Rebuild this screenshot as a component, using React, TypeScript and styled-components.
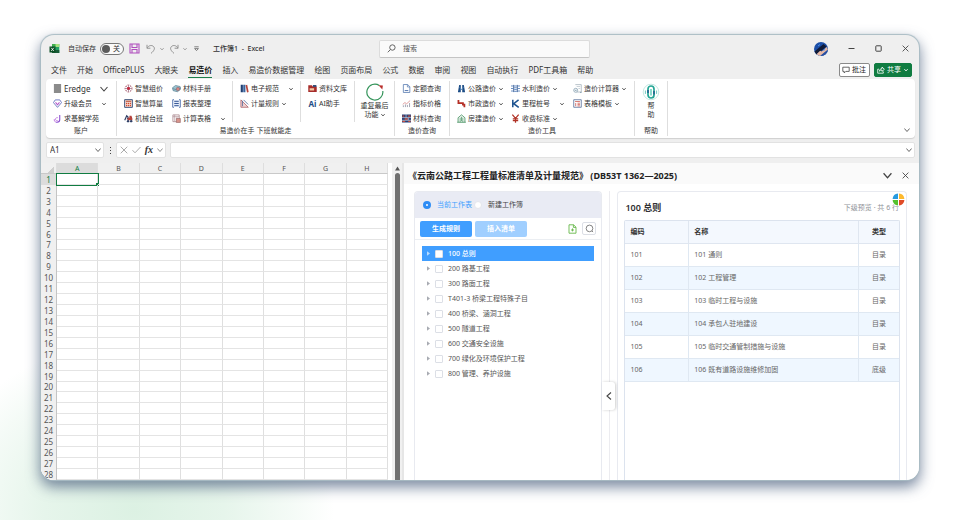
import React, { useState } from "react";
import styled, { createGlobalStyle, css } from "styled-components";

const Global = createGlobalStyle`
  *, *::before, *::after { box-sizing: border-box; }
  body {
    margin: 0;
    background: #fff;
    color: #333;
    font: 7px/10px "Noto Sans", "Noto Sans CJK SC", sans-serif;
  }
  button, input { font: inherit; color: inherit; margin: 0; padding: 0; border: 0; background: none; }
  ul { list-style: none; margin: 0; padding: 0; }
  h1, h2 { margin: 0; }
  svg { display: block; flex: none; }
`;

/* ---------- page and window ---------- */

const Page = styled.main`
  display: flex;
  height: 100vh;
  padding: 35px 41px 40px;
  background: radial-gradient(ellipse 200px 170px at 14% 98%, #dcf1e3 0%, #e6f5eb 45%, #f5fbf7 80%, rgba(255, 255, 255, 0) 100%), #fff;
`;

const AppWindow = styled.div`
  flex: 1;
  min-width: 0;
  display: flex;
  flex-direction: column;
  overflow: hidden;
  border-radius: 13px;
  background: #efefef;
  box-shadow: 0 0 1px 1px #a9bcc4, 0 6px 14px 1px rgba(78, 98, 128, 0.75);
`;

/* ---------- title bar ---------- */

const TitleBar = styled.header`
  flex: none;
  display: grid;
  grid-template-columns: 338px minmax(80px, 211px) 1fr;
  align-items: center;
  height: 27px;
`;

const QuickAccess = styled.div`
  display: flex;
  align-items: center;
  padding-left: 8px;
`;

const QuickButton = styled.button<{ $gap?: number }>`
  display: flex;
  align-items: center;
  gap: 4px;
  margin-left: ${(p) => p.$gap ?? 5}px;
`;

const AutoSave = styled.label`
  display: flex;
  align-items: center;
  gap: 4px;
  margin-left: 8px;
`;

const Switch = styled.span`
  display: flex;
  align-items: center;
  width: 24px;
  height: 12px;
  padding: 0 3px 0 1px;
  border: 1px solid #777;
  border-radius: 6px;
  background: #fafafa;
  justify-content: space-between;
`;

const SwitchInput = styled.input`
  appearance: none;
  width: 8px;
  height: 8px;
  border-radius: 50%;
  background: #5c5c5c;
`;

const DocTitle = styled.h1`
  margin-left: 14px;
  font-size: 7px;
  font-weight: 500;
  white-space: pre;
`;

const SearchBox = styled.label`
  display: flex;
  align-items: center;
  gap: 7px;
  height: 18px;
  padding-left: 7px;
  border: 1px solid #dcdcdc;
  border-bottom-color: #c4c4c4;
  border-radius: 2px;
  background: #fafafa;
`;

const SearchInput = styled.input`
  flex: 1;
  min-width: 0;
  outline: 0;
  &::placeholder { color: #555; opacity: 1; }
`;

const WindowButtons = styled.div`
  display: flex;
  align-items: center;
  justify-content: flex-end;
  gap: 20px;
  padding-right: 10px;
`;

const PlainButton = styled.button`
  display: grid;
  place-items: center;
`;

/* ---------- tabs ---------- */

const TabRow = styled.div`
  flex: none;
  display: flex;
  justify-content: space-between;
  height: 17px;
  padding: 0 7px 0 10px;
`;

const Tabs = styled.nav`
  display: flex;
  gap: 10px;
`;

const Tab = styled.a<{ $active?: boolean }>`
  height: 16px;
  padding-top: 3px;
  color: #333;
  font-size: 8px;
  line-height: 10px;
  text-decoration: none;
  white-space: nowrap;
  ${(p) => p.$active && css`
    color: #111;
    font-weight: 700;
    border-bottom: 1px solid #1b7f4b;
  `}
`;

const TabActions = styled.div`
  display: flex;
  gap: 4px;
  padding-top: 1px;
`;

const ActionButton = styled.button<{ $primary?: boolean }>`
  display: flex;
  align-items: center;
  gap: 2px;
  height: 14px;
  padding: 0 3px 0 2px;
  border: 1px solid ${(p) => (p.$primary ? "#107c41" : "#8a8a8a")};
  border-radius: 2px;
  background: ${(p) => (p.$primary ? "#107c41" : "#fff")};
  color: ${(p) => (p.$primary ? "#fff" : "#222")};
  white-space: nowrap;
`;

/* ---------- ribbon ---------- */

const Ribbon = styled.section`
  flex: none;
  display: flex;
  height: 59px;
  margin: 0 4px 0 5px;
  padding: 2px 0;
  border-radius: 4px;
  background: #fff;
  box-shadow: 0 1px 1px #cfcfcf;
`;

const Group = styled.div<{ $width: number }>`
  display: flex;
  flex: none;
  flex-direction: column;
  width: ${(p) => p.$width}px;
  border-right: 1px solid #dedede;
`;

const GroupBody = styled.div`
  display: flex;
  height: 45px;
`;

const GroupLabel = styled.div`
  height: 10px;
  color: #333;
  text-align: center;
`;

const ToolColumn = styled.div<{ $width: number; $divided?: boolean }>`
  flex: none;
  width: ${(p) => p.$width}px;
  padding-left: 7px;
  ${(p) => p.$divided && "border-right: 1px solid #dedede; height: 41px;"}
`;

const Tool = styled.button`
  display: flex;
  align-items: center;
  gap: 2px;
  width: 100%;
  height: 15px;
  white-space: nowrap;
`;

const ToolName = styled.span<{ $large?: boolean }>`
  font-size: ${(p) => (p.$large ? 8 : 7)}px;
`;

const ToolChevron = styled.span<{ $far?: boolean }>`
  padding-left: ${(p) => (p.$far ? 8 : 1)}px;
`;

const BigTool = styled.button`
  display: flex;
  flex: 1;
  flex-direction: column;
  align-items: center;
  padding-top: 2px;
  line-height: 9px;
`;

const BigToolLine = styled.span`
  display: flex;
  align-items: center;
  gap: 2px;
`;

const RibbonEnd = styled.div`
  flex: 1;
  display: flex;
  align-items: flex-end;
  justify-content: flex-end;
  padding: 0 5px 3px 0;
`;

/* ---------- formula bar ---------- */

const FormulaBar = styled.div`
  flex: none;
  display: flex;
  align-items: center;
  gap: 4px;
  height: 25px;
  padding: 0 4px 1px 5px;
`;

const Field = styled.div<{ $width?: number }>`
  flex: ${(p) => (p.$width ? `0 0 ${p.$width}px` : "1 1 0")};
  min-width: 0;
  display: flex;
  align-items: center;
  justify-content: space-between;
  height: 16px;
  padding: 0 2px 0 3px;
  border: 1px solid #e2e2e2;
  border-radius: 2px;
  background: #fff;
`;

const FieldInput = styled.input`
  flex: 1 1 0;
  width: 0;
  min-width: 0;
  outline: 0;
  font-size: 8px;
`;

const Dots = styled.span`
  display: grid;
  place-items: center;
  flex: none;
  width: 4px;
`;

const Fx = styled.span`
  font: italic 700 10px/12px "Liberation Serif", serif;
`;

/* ---------- sheet ---------- */

const Workspace = styled.div`
  flex: 1;
  min-height: 0;
  display: flex;
`;

const SheetPane = styled.div`
  flex: 363 1 0;
  min-width: 0;
  display: flex;
  background: #f0f0f0;
`;

const SheetArea = styled.div`
  flex: 1;
  min-width: 0;
  padding-right: 4px;
  background: repeating-linear-gradient(#fff, #fff);
`;

const Sheet = styled.table`
  width: 100%;
  height: 100%;
  border-collapse: separate;
  border-spacing: 0;
  table-layout: fixed;
  background: #fff;
  color: #555;
  font-size: 8px;
  line-height: 9px;
`;

const ColHead = styled.th<{ $active?: boolean; $width?: string }>`
  width: ${(p) => p.$width ?? "auto"};
  height: 11px;
  padding: 0;
  font-size: 7px;
  font-weight: 400;
  border-right: 1px solid #dedede;
  border-bottom: 1px solid ${(p) => (p.$active ? "#107c41" : "#c9c9c9")};
  background: ${(p) => (p.$active ? "#dcdcdc" : "#f0f0f0")};
  color: ${(p) => (p.$active ? "#107c41" : "#555")};
`;

const SelectAll = styled.button`
  display: block;
  width: 7px;
  height: 6px;
  margin: 3px 2px 0 auto;
  background: linear-gradient(135deg, transparent 50%, #cfcfcf 50%);
`;

const RowHead = styled.th<{ $active?: boolean }>`
  padding: 0;
  font-weight: 400;
  border-right: 1px solid #c4c4c4;
  background: ${(p) => (p.$active ? "#dcdcdc" : "#f0f0f0")};
  color: ${(p) => (p.$active ? "#107c41" : "#555")};
`;

const Cell = styled.td<{ $active?: boolean }>`
  position: relative;
  padding: 0;
  border-right: 1px solid #dfdfdf;
  border-bottom: 1px solid #e4e4e4;
  ${(p) => p.$active && css`
    outline: 1px solid #107c41;
    &::after {
      content: "";
      position: absolute;
      right: -2px;
      bottom: -2px;
      width: 3px;
      height: 3px;
      background: #107c41;
    }
  `}
`;

const ScrollTrack = styled.div`
  flex: none;
  display: flex;
  flex-direction: column;
  align-items: center;
  gap: 2px;
  width: 12px;
  padding-top: 3px;
  border-right: 2px solid #e6e6e6;
`;

const ScrollThumb = styled.div`
  flex: 1;
  width: 5px;
  border-radius: 3px 3px 0 0;
  background: #707070;
`;

/* ---------- task pane ---------- */

const TaskPane = styled.aside`
  flex: 515 1 0;
  min-width: 0;
  display: flex;
  flex-direction: column;
  background: #fff;
`;

const PaneHeader = styled.div`
  flex: none;
  display: flex;
  align-items: center;
  justify-content: space-between;
  height: 21px;
  padding: 4px 10px 0 4px;
  background: #fafafa;
`;

const PaneTitle = styled.h2`
  color: #222;
  font-size: 9px;
  line-height: 12px;
  font-weight: 700;
  white-space: pre;
`;

const PaneButtons = styled.div`
  display: flex;
  align-items: center;
  gap: 10px;
`;

const PaneBody = styled.div`
  flex: 1;
  min-height: 0;
  display: flex;
  padding: 7px 12px 0 10px;
`;

const Card = styled.section<{ $grow: number }>`
  flex: ${(p) => p.$grow} 1 0;
  min-width: 0;
  display: flex;
  flex-direction: column;
  border: 1px solid #e8eaf0;
  border-bottom: 0;
  border-radius: 4px 4px 0 0;
  background: #fff;
`;

const Gutter = styled.div`
  position: relative;
  flex: none;
  width: 15px;
  padding-left: 7px;
`;

const GutterLine = styled.div`
  width: 1px;
  height: 100%;
  background: #ececf0;
`;

const CollapseButton = styled.button`
  position: absolute;
  left: 0;
  top: 66%;
  display: grid;
  place-items: center;
  width: 13px;
  height: 28px;
  border-radius: 0 3px 3px 0;
  background: #fff;
  box-shadow: 1px 0 3px rgba(0, 0, 0, 0.2);
`;

const TargetBar = styled.div`
  flex: none;
  display: flex;
  align-items: center;
  gap: 2px;
  height: 26px;
  padding-left: 8px;
  border-radius: 3px 3px 0 0;
  background: #e9ebf4;
`;

const RadioLabel = styled.label`
  display: flex;
  align-items: center;
  gap: 6px;
  color: #444;
  &:has(input:checked) { color: #409eff; }
`;

const Radio = styled.input`
  appearance: none;
  width: 8px;
  height: 8px;
  border: 1px solid #e4e6ec;
  border-radius: 50%;
  background: #fff;
  &:checked { border: 3px solid #2f8df5; }
`;

const Actions = styled.div`
  flex: none;
  display: flex;
  align-items: center;
  gap: 3px;
  height: 22px;
  padding: 0 5px;
  border-bottom: 1px solid #ebeef2;
`;

const SolidButton = styled.button<{ $muted?: boolean }>`
  width: 52px;
  height: 16px;
  border-radius: 2px;
  background: ${(p) => (p.$muted ? "#a0cfff" : "#409eff")};
  color: #fff;
  font-weight: 700;
`;

const ActionsEnd = styled.div`
  display: flex;
  align-items: center;
  gap: 5px;
  margin-left: auto;
`;

const BoxedButton = styled.button`
  display: grid;
  place-items: center;
  width: 14px;
  height: 13px;
  border: 1px solid #dcdfe6;
  border-radius: 2px;
`;

const Tree = styled.ul`
  padding: 6px 7px;
`;

const TreeItem = styled.li<{ $selected?: boolean }>`
  display: flex;
  align-items: center;
  gap: 4px;
  height: 15px;
  padding-left: 4px;
  color: ${(p) => (p.$selected ? "#fff" : "#555")};
  background: ${(p) => (p.$selected ? "#409eff" : "transparent")};
  font-weight: ${(p) => (p.$selected ? 500 : 400)};
`;

const TreeLabel = styled.label`
  display: flex;
  align-items: center;
  gap: 5px;
  white-space: nowrap;
`;

const CheckBox = styled.input`
  appearance: none;
  width: 8px;
  height: 8px;
  border: 1px solid #dcdfe6;
  border-radius: 1px;
  background: #fff;
  &:checked { background: #409eff; }
`;

const PreviewHeader = styled.div`
  position: relative;
  flex: none;
  display: flex;
  align-items: center;
  justify-content: space-between;
  height: 28px;
  padding: 3px 7px 0;
`;

const PreviewTitle = styled.h2`
  color: #303133;
  font-size: 9px;
  line-height: 12px;
  font-weight: 600;
`;

const PreviewNote = styled.span`
  color: #909399;
`;

const FloatingBadge = styled.button`
  position: absolute;
  right: 1px;
  top: 1px;
`;

const TableFrame = styled.div`
  flex: 1;
  min-height: 0;
  margin: 0 6px;
  border: 1px solid #dce3ee;
  border-width: 1px 1px 0;
  border-radius: 2px 2px 0 0;
`;

const DataTable = styled.table`
  width: 100%;
  border-collapse: separate;
  border-spacing: 0;
  table-layout: fixed;
  color: #666;
`;

const DataHead = styled.th<{ $width?: string; $center?: boolean }>`
  width: ${(p) => p.$width ?? "auto"};
  height: 23px;
  padding: 0 5px;
  text-align: ${(p) => (p.$center ? "center" : "left")};
  color: #333;
  font-weight: 700;
  background: #f4f8fe;
  border-bottom: 1px solid #dfe6f0;
  & + & { border-left: 1px solid #dfe6f0; }
`;

const DataCell = styled.td<{ $center?: boolean }>`
  height: 23px;
  padding: 0 5px;
  text-align: ${(p) => (p.$center ? "center" : "left")};
  border-bottom: 1px solid #dfe8f2;
  & + & { border-left: 1px solid #dfe8f2; }
  tr:nth-child(even) > & { background: #eff7ff; }
`;

/* ---------- icons ---------- */

const Chevron = ({ size = 4, color = "#444", dir = "down" }: { size?: number; color?: string; dir?: "down" | "left" }) => (
  <svg width={size} height={size} viewBox="0 0 8 8" fill="none" stroke={color} strokeWidth={size > 5 ? 1.1 : 1.6}>
    <path d={dir === "down" ? "M0.5 2l3.5 4 3.5-4" : "M6 0.5L2 4l4 3.5"} />
  </svg>
);

const Close = ({ size = 7, color = "#444" }: { size?: number; color?: string }) => (
  <svg width={size} height={size} viewBox="0 0 8 8" stroke={color} strokeWidth="1">
    <path d="M0.7 0.7l6.6 6.6M7.3 0.7L0.7 7.3" />
  </svg>
);

const Magnifier = ({ flip, color = "#555" }: { flip?: boolean; color?: string }) => (
  <svg width="9" height="9" viewBox="0 0 10 10" fill="none" stroke={color} strokeWidth="1">
    {flip ? <path d="M6 0.9a3 3 0 1 1 0 6a3 3 0 0 1 0-6M3.8 6.2L0.9 9.2" /> : <path d="M5 1.2a3.7 3.7 0 1 1 0 7.4a3.7 3.7 0 0 1 0-7.4M7.6 7.6L9 9" />}
  </svg>
);

const glyphs: Record<string, React.ReactNode> = {
  swatch: <path d="M1 0h8v10H1z" fill="#8b8b8b" />,
  gem: <><path d="M2.5 1h5L9.5 4 5 9.3 0.5 4z" fill="#fff" stroke="#5566b8" strokeWidth="0.9" /><path d="M2.8 3.8L5 6.4l2.2-2.6" fill="none" stroke="#b050c8" strokeWidth="1.2" /></>,
  moon: <><path d="M7.5 1v5.2a3 3 0 0 1-3 3H3.4" fill="none" stroke="#8a4fd0" strokeWidth="1.2" /><path d="M5.4 4.2a1.8 1.8 0 1 0 0 3.2M1.4 5.6a3 3 0 0 0 2 3.6" fill="none" stroke="#c07be0" strokeWidth="1" /></>,
  flower: <><circle cx="5" cy="5" r="4" fill="none" stroke="#c98a94" strokeWidth="1" strokeDasharray="2 0.8" /><path d="M5 1v8M1 5h8M2.3 2.3l5.4 5.4M7.7 2.3L2.3 7.7" stroke="#8a5570" strokeWidth="0.7" /><circle cx="5" cy="5" r="1.6" fill="#c8283c" /></>,
  abacus: <><path d="M0.7 0.7h8.6v8.6H0.7z" fill="#f8e2d8" stroke="#2d4570" strokeWidth="1" /><path d="M2 2h6v1H2z" fill="#b4462e" /><path d="M2.2 4.8h1.4M4.3 4.8h1.4M6.4 4.8h1.4M2.2 7.2h1.4M4.3 7.2h1.4M6.4 7.2h1.4" stroke="#d4492d" strokeWidth="1.5" /></>,
  digger: <><path d="M0.8 7L3 2l1.6 1.5-1 2.5" fill="none" stroke="#2e3f66" strokeWidth="1.3" /><path d="M4 4.2h2V2h2.3l1 3v2H4z" fill="#b4423c" /><circle cx="4.5" cy="8" r="1.3" fill="#2e3f66" /><circle cx="8" cy="8" r="1.3" fill="#2e3f66" /></>,
  stack: <><path d="M0.5 4.2L4 1.6l5 1.2 0.6 3L6 8.6 1.2 7.4z" fill="#9bc3cf" stroke="#51798c" strokeWidth="0.7" /><path d="M1 5.2l4 1.2 4.4-2.2" fill="none" stroke="#51798c" strokeWidth="0.7" /><circle cx="6.6" cy="5.6" r="1.9" fill="#d9847e" stroke="#7d6a76" strokeWidth="0.6" /></>,
  report: <><path d="M2.2 0.8H0.8v8.4h1.4M7.8 0.8h1.4v8.4H7.8" fill="none" stroke="#4267a8" strokeWidth="1" /><path d="M2.4 1h5.2v8H2.4z" fill="#dfe9f7" /><path d="M2.5 2.6h5M2.5 5h5M2.5 7.4h5" stroke="#2a4c8e" strokeWidth="1" /></>,
  calcSheet: <><path d="M1 1h7v7.5H1z" fill="#fff" stroke="#a07a80" strokeWidth="0.8" /><path d="M1 3h7M3 1v7M5.5 3v5" stroke="#a07a80" strokeWidth="0.6" /><path d="M4.8 5h4.5v4.5H4.8z" fill="#d8938a" stroke="#8c5a5c" strokeWidth="0.6" /></>,
  books: <><path d="M0.8 0.8h2.4v8.4H0.8z" fill="#1f3f73" /><path d="M3.6 0.8H6v8.4H3.6z" fill="#39659e" /><path d="M6.2 1.4L8 0.9l1.6 8-1.8 0.5z" fill="#b5443b" /></>,
  ruler: <><path d="M1 1v8.2h8.2z" fill="#f0d3d3" stroke="#a5535c" strokeWidth="0.8" /><path d="M4 1l5 5M2.8 2v6" stroke="#526b9c" strokeWidth="0.9" /></>,
  folder: <><path d="M0.3 1.5h4l1 1.2h4.4V9H0.3z" fill="#a62c2a" /><path d="M1.8 4.8h5v2.4h-5z" fill="#f3c9a5" /><path d="M5.5 1h3.8v2.4H5.5z" fill="#384f78" /></>,
  doc: <><path d="M1.5 0.6h4.8L8.7 3v6.4H1.5z" fill="#fff" stroke="#456ca8" strokeWidth="0.8" /><path d="M3 7.3h4" stroke="#456ca8" strokeWidth="1" /><path d="M6 0.8v2.5h2.6" stroke="#456ca8" fill="none" strokeWidth="0.7" /></>,
  trend: <><path d="M0.8 6l2.4-2 2 1.3L9 1.8" fill="none" stroke="#d98a8a" strokeWidth="0.9" /><path d="M1.5 9V7M3.8 9V6M6 9V6.6M8.4 9V4.5" stroke="#9b9cab" strokeWidth="1" /></>,
  bricks: <><path d="M0 0.5h10v9H0z" fill="#243f77" /><path d="M0.5 2.4h2M6.5 2.4h3M3 5.6h3.5M0.5 8.2h3M7 8.2h2.5" stroke="#ca5140" strokeWidth="1.5" /><path d="M0 4h10M0 7h10M4.5 0.5v3.5M7 4.3v2.5" stroke="#fff" strokeWidth="0.6" /></>,
  road: <><path d="M1 9.3L2.4 1h1.8v8.3zM5.8 9.3V1h1.8L9 9.3z" fill="#1d4d86" /><path d="M3 3.5l2 3 2-3" fill="none" stroke="#5388bb" strokeWidth="1" /></>,
  pipe: <path d="M1.6 1.2v3.4h5v1.6h1.6v3" fill="none" stroke="#b52f26" strokeWidth="2" />,
  house: <><path d="M1.2 9V4.2L5 1l3.8 3.2V9M0.2 9.2h9.6" fill="none" stroke="#3b8c58" strokeWidth="0.9" /><path d="M3.5 4v5M6.5 4v5M5 3v5" stroke="#3b8c58" strokeWidth="0.8" /></>,
  dam: <><path d="M3 1v8M7 1v8" stroke="#2f568f" strokeWidth="1" /><path d="M0 2.2h2.4M0 5h2.4M0 7.8h2.4M7.6 2.2H10M7.6 5H10M7.6 7.8H10M3.5 2.2h3M3.5 4.2h3M3.5 6.2h3M3.5 8.2h3" stroke="#5d86bf" strokeWidth="1" /></>,
  stake: <path d="M2 0.8v8.4M8.4 1L3 5.2l5.6 4.2" fill="none" stroke="#1f5490" strokeWidth="1.7" />,
  yen: <path d="M1.5 0.6L5 4.8l3.5-4.2M5 4.8v4.8M2 5.3h6M2 7.3h6" fill="none" stroke="#b03226" strokeWidth="1.4" />,
  calculator: <><path d="M2.6 0.7h6.6v8.2H4" fill="none" stroke="#9dabb5" strokeWidth="0.8" /><path d="M4 2.8h4M6 5h2" stroke="#b7c2ca" strokeWidth="0.8" /><circle cx="3" cy="7" r="2.2" fill="#fff" stroke="#7a97a8" strokeWidth="0.8" /><path d="M2 7h2M8 9.4h1.5" stroke="#567c92" strokeWidth="0.8" /></>,
  template: <><path d="M0.8 0.8h8.4v8.4H0.8z" fill="#fff" stroke="#586f9b" strokeWidth="0.9" /><path d="M2.3 2.8h5.4M3 4.5v3.5M5 4.7h2.7M5 6.2h2.7M5 7.7h2.7" stroke="#cd5a52" strokeWidth="0.9" /></>,
};

const Glyph = ({ name, size = 9 }: { name: string; size?: number }) => (
  <svg width={size} height={size} viewBox="0 0 10 10">{glyphs[name]}</svg>
);

const AiMark = styled.span`
  width: 9px;
  color: #1f4d86;
  font-size: 8px;
  line-height: 9px;
  font-weight: 700;
`;

const ExcelLogo = () => (
  <svg width="11" height="11" viewBox="0 0 11 11">
    <path d="M3 1h7.3v9H3z" fill="#21a366" />
    <path d="M3 1h4v2.4H3z" fill="#3fae4f" />
    <path d="M6.5 1h3.8v3H6.5z" fill="#a6e07c" />
    <path d="M3 7h7.3v3H3z" fill="#185c37" />
    <path d="M0.5 3.4h6v6h-6z" fill="#0b4f24" />
    <path d="M2.2 4.8l2.6 3.2M4.8 4.8L2.2 8" stroke="#fff" strokeWidth="0.8" />
  </svg>
);

const SaveIcon = () => (
  <svg width="11" height="11" viewBox="0 0 11 11" fill="none" stroke="#b04fbe" strokeWidth="1.1">
    <path d="M1 1h9v9H1zM3 1v3.5h5V1M3 10V6.5h5V10" />
  </svg>
);

const UndoIcon = ({ mirrored }: { mirrored?: boolean }) => (
  <svg width="10" height="10" viewBox="0 0 10 10" fill="none" stroke="#929292" strokeWidth="1">
    {mirrored
      ? <path d="M9 0.8v3.4H5.6M9 4.2C7.2 1.2 4.2 0.8 2.4 2.6C0.8 4.4 1.6 6.4 5 9.4" />
      : <path d="M1 0.8v3.4h3.4M1 4.2C2.8 1.2 5.8 0.8 7.6 2.6C9.2 4.4 8.4 6.4 5 9.4" />}
  </svg>
);

const MoreIcon = () => (
  <svg width="5" height="6" viewBox="0 0 5 6" fill="none" stroke="#666" strokeWidth="0.8">
    <path d="M0.3 0.8h4.4M0.6 2.6l1.9 2 1.9-2z" />
  </svg>
);

const Avatar = () => (
  <svg width="14" height="14" viewBox="0 0 14 14">
    <circle cx="7" cy="7" r="7" fill="#1c4fa8" />
    <path d="M0.5 9.5L9.5 2l3.1 2.4L2.5 12.4z" fill="#101b38" />
    <path d="M2.5 12.3l3.6-3.6 1.6 0.9 5-4.6 1.2 2.6L6 13.9z" fill="#e8b9a4" />
    <path d="M7 14l6.9-6A7 7 0 0 1 7 14z" fill="#2c4fa0" />
    <path d="M4 4l2-1.5M9.5 8.5l1.5-1" stroke="#4d93ea" strokeWidth="1" />
  </svg>
);

const MinimizeIcon = () => (
  <svg width="7" height="7" viewBox="0 0 7 7" stroke="#444" strokeWidth="1"><path d="M0.5 3.5h6" /></svg>
);

const MaximizeIcon = () => (
  <svg width="7" height="7" viewBox="0 0 7 7" fill="none" stroke="#444" strokeWidth="1"><rect x="0.8" y="0.8" width="5.4" height="5.4" rx="0.6" /></svg>
);

const CommentIcon = () => (
  <svg width="8" height="8" viewBox="0 0 8 8" fill="none" stroke="#444" strokeWidth="0.8"><path d="M0.8 1.2h6.4v4.2H3.8L2.2 7V5.4H0.8z" /></svg>
);

const ShareIcon = () => (
  <svg width="8" height="8" viewBox="0 0 8 8" fill="none" stroke="#fff" strokeWidth="0.8"><path d="M2 3.2H0.7v4h5.6V5.5M2.4 5.2C2.6 3.4 3.6 2.6 5 2.6V1l2.4 2.3L5 5.4V4C4 4 3 4.4 2.4 5.2z" /></svg>
);

const RepeatIcon = () => (
  <svg width="18" height="18" viewBox="0 0 18 18" fill="none">
    <path d="M13.3 2.4A8 8 0 1 0 16.8 8" stroke="#34945a" strokeWidth="1.2" />
    <path d="M12.5 2.2l4.4 0.4-0.6 4z" fill="#b92f2c" />
  </svg>
);

const HelpIcon = () => (
  <svg width="18" height="18" viewBox="0 0 18 18" fill="none">
    <circle cx="9" cy="9" r="7.8" stroke="#b5e2db" strokeWidth="0.8" />
    <path d="M6 7.8V6a3 3 0 0 1 6 0v6a3 3 0 0 1-6 0z" stroke="#24a695" strokeWidth="1.7" />
    <path d="M6 7V10M12 8v3.5" stroke="#1f5f8e" strokeWidth="1.6" />
    <path d="M9 6v6.4" stroke="#3bc2ae" strokeWidth="1.2" />
    <path d="M3.4 7.5v3.4M14.6 7.5v3.4" stroke="#6cc9bd" strokeWidth="1" />
  </svg>
);

const SheetAddIcon = () => (
  <svg width="9" height="10" viewBox="0 0 9 10" fill="none" stroke="#67b84a" strokeWidth="0.9">
    <path d="M1 0.8h4.6L8 3.2v6H1zM5.4 0.8v2.6H8M4.5 4.4v3M3 6h3" />
  </svg>
);

const PinwheelIcon = () => (
  <svg width="13" height="13" viewBox="0 0 13 13">
    <circle cx="6.5" cy="6.5" r="6.5" fill="#fff" />
    <path d="M6 6V0.6A6 6 0 0 0 0.6 6z" fill="#279be0" />
    <path d="M7 6h5.4A6 6 0 0 0 7 0.6z" fill="#fdb92e" />
    <path d="M6 7H0.6A6 6 0 0 0 6 12.4z" fill="#55c02c" />
    <path d="M7 7v5.4A6 6 0 0 0 12.4 7z" fill="#e04b27" />
  </svg>
);

const TreeArrow = ({ selected }: { selected?: boolean }) => (
  <svg width="5" height="5" viewBox="0 0 5 5"><path d="M1 0.3L4 2.5 1 4.7z" fill={selected ? "#b8dcff" : "#a8abb2"} /></svg>
);

/* ---------- content ---------- */

type ToolSpec = { icon: string; name: string; chevron?: "near" | "far" };

const tabNames = ["文件", "开始", "OfficePLUS", "大眼夹", "易造价", "插入", "易造价数据管理", "绘图", "页面布局", "公式", "数据", "审阅", "视图", "自动执行", "PDF工具箱", "帮助"];

const smartTools: ToolSpec[] = [
  { icon: "flower", name: "智慧组价" },
  { icon: "abacus", name: "智慧算量" },
  { icon: "digger", name: "机械台班" },
];
const sheetTools: ToolSpec[] = [
  { icon: "stack", name: "材料手册" },
  { icon: "report", name: "报表整理" },
  { icon: "calcSheet", name: "计算表格", chevron: "far" },
];
const ruleTools: ToolSpec[] = [
  { icon: "books", name: "电子规范", chevron: "far" },
  { icon: "ruler", name: "计量规则", chevron: "near" },
];
const libraryTools: ToolSpec[] = [
  { icon: "folder", name: "资料文库" },
  { icon: "ai", name: "AI助手" },
];
const queryTools: ToolSpec[] = [
  { icon: "doc", name: "定额查询" },
  { icon: "trend", name: "指标价格" },
  { icon: "bricks", name: "材料查询" },
];
const costTools: ToolSpec[] = [
  { icon: "road", name: "公路造价", chevron: "near" },
  { icon: "pipe", name: "市政造价", chevron: "near" },
  { icon: "house", name: "房建造价", chevron: "near" },
];
const waterTools: ToolSpec[] = [
  { icon: "dam", name: "水利造价", chevron: "near" },
  { icon: "stake", name: "里程桩号", chevron: "far" },
  { icon: "yen", name: "收费标准", chevron: "near" },
];
const templateTools: ToolSpec[] = [
  { icon: "calculator", name: "造价计算器", chevron: "near" },
  { icon: "template", name: "表格模板", chevron: "near" },
];

const columns = ["A", "B", "C", "D", "E", "F", "G", "H"];
const rows = Array.from({ length: 28 }, (_, i) => i + 1);

const chapters = ["100 总则", "200 路基工程", "300 路面工程", "T401-3 桥梁工程特殊子目", "400 桥梁、涵洞工程", "500 隧道工程", "600 交通安全设施", "700 绿化及环境保护工程", "800 管理、养护设施"];

const sections = [
  ["101", "101 通则", "目录"],
  ["102", "102 工程管理", "目录"],
  ["103", "103 临时工程与设施", "目录"],
  ["104", "104 承包人驻地建设", "目录"],
  ["105", "105 临时交通管制措施与设施", "目录"],
  ["106", "106 既有道路设施维修加固", "底级"],
];

const ToolList = ({ tools, width, divided }: { tools: ToolSpec[]; width: number; divided?: boolean }) => (
  <ToolColumn $width={width} $divided={divided}>
    {tools.map((t) => (
      <Tool key={t.name}>
        {t.icon === "ai" ? <AiMark aria-hidden="true">Ai</AiMark> : <Glyph name={t.icon} />}
        <ToolName>{t.name}</ToolName>
        {t.chevron && <ToolChevron $far={t.chevron === "far"}><Chevron /></ToolChevron>}
      </Tool>
    ))}
  </ToolColumn>
);

export default function App() {
  const [target, setTarget] = useState("current");
  const [chapter, setChapter] = useState(chapters[0]);

  return (
    <Page>
      <Global />
      <AppWindow>
        <TitleBar>
          <QuickAccess>
            <ExcelLogo />
            <AutoSave>
              自动保存
              <Switch><SwitchInput type="checkbox" />关</Switch>
            </AutoSave>
            <QuickButton aria-label="保存"><SaveIcon /></QuickButton>
            <QuickButton $gap={6} aria-label="撤消"><UndoIcon /><Chevron color="#999" /></QuickButton>
            <QuickButton aria-label="恢复"><UndoIcon mirrored /><Chevron color="#999" /></QuickButton>
            <QuickButton $gap={7} aria-label="自定义快速访问工具栏"><MoreIcon /></QuickButton>
            <DocTitle>{"工作簿1  -  Excel"}</DocTitle>
          </QuickAccess>
          <SearchBox>
            <Magnifier flip />
            <SearchInput type="text" placeholder="搜索" aria-label="搜索" />
          </SearchBox>
          <WindowButtons>
            <PlainButton aria-label="账户"><Avatar /></PlainButton>
            <PlainButton aria-label="最小化"><MinimizeIcon /></PlainButton>
            <PlainButton aria-label="最大化"><MaximizeIcon /></PlainButton>
            <PlainButton aria-label="关闭"><Close /></PlainButton>
          </WindowButtons>
        </TitleBar>

        <TabRow>
          <Tabs>
            {tabNames.map((t) => <Tab key={t} href="#" $active={t === "易造价"}>{t}</Tab>)}
          </Tabs>
          <TabActions>
            <ActionButton><CommentIcon />批注</ActionButton>
            <ActionButton $primary><ShareIcon />共享<ToolChevron><Chevron color="#fff" /></ToolChevron></ActionButton>
          </TabActions>
        </TabRow>

        <Ribbon>
          <Group $width={71}>
            <GroupBody>
              <ToolColumn $width={70}>
                <Tool><Glyph name="swatch" /><ToolName $large>Eredge</ToolName><ToolChevron $far><Chevron size={8} /></ToolChevron></Tool>
                <Tool><Glyph name="gem" /><ToolName>升级会员</ToolName><ToolChevron $far><Chevron /></ToolChevron></Tool>
                <Tool><Glyph name="moon" /><ToolName>求基解学苑</ToolName></Tool>
              </ToolColumn>
            </GroupBody>
            <GroupLabel>账户</GroupLabel>
          </Group>
          <Group $width={278}>
            <GroupBody>
              <ToolList tools={smartTools} width={48} />
              <ToolList tools={sheetTools} width={68} divided />
              <ToolList tools={ruleTools} width={68} divided />
              <ToolList tools={libraryTools} width={54} divided />
              <BigTool>
                <RepeatIcon />
                <BigToolLine>重复最后</BigToolLine>
                <BigToolLine>功能 <Chevron /></BigToolLine>
              </BigTool>
            </GroupBody>
            <GroupLabel>易造价在手 下班就能走</GroupLabel>
          </Group>
          <Group $width={55}>
            <GroupBody><ToolList tools={queryTools} width={54} /></GroupBody>
            <GroupLabel>造价查询</GroupLabel>
          </Group>
          <Group $width={185}>
            <GroupBody>
              <ToolList tools={costTools} width={54} />
              <ToolList tools={waterTools} width={62} />
              <ToolList tools={templateTools} width={68} />
            </GroupBody>
            <GroupLabel>造价工具</GroupLabel>
          </Group>
          <Group $width={33}>
            <GroupBody>
              <BigTool>
                <HelpIcon />
                <BigToolLine>帮</BigToolLine>
                <BigToolLine>助</BigToolLine>
              </BigTool>
            </GroupBody>
            <GroupLabel>帮助</GroupLabel>
          </Group>
          <RibbonEnd><PlainButton aria-label="折叠功能区"><Chevron size={6} /></PlainButton></RibbonEnd>
        </Ribbon>

        <FormulaBar>
          <Field $width={58}>
            <FieldInput type="text" defaultValue="A1" aria-label="名称框" />
            <Chevron size={6} />
          </Field>
          <Dots>
            <svg width="3" height="9" viewBox="0 0 3 9" fill="#444"><path d="M1 1h1v1H1zM1 4h1v1H1zM1 7h1v1H1z" /></svg>
          </Dots>
          <Field $width={50}>
            <Close size={8} color="#aaa" />
            <svg width="9" height="8" viewBox="0 0 9 8" fill="none" stroke="#aaa"><path d="M0.5 4.2L3 6.8 8.5 1" /></svg>
            <Fx>fx</Fx>
            <Chevron size={6} color="#777" />
          </Field>
          <Field>
            <FieldInput type="text" aria-label="编辑栏" />
            <Chevron size={6} />
          </Field>
        </FormulaBar>

        <Workspace>
          <SheetPane>
            <SheetArea>
              <Sheet>
                <thead>
                  <tr>
                    <ColHead $width="16px"><SelectAll aria-label="全选" /></ColHead>
                    {columns.map((c) => <ColHead key={c} $active={c === "A"}>{c}</ColHead>)}
                  </tr>
                </thead>
                <tbody>
                  {rows.map((r) => (
                    <tr key={r}>
                      <RowHead $active={r === 1}>{r}</RowHead>
                      {columns.map((c) => <Cell key={c} $active={r === 1 && c === "A"} />)}
                    </tr>
                  ))}
                </tbody>
              </Sheet>
            </SheetArea>
            <ScrollTrack>
              <svg width="5" height="5" viewBox="0 0 5 5"><path d="M2.5 0.5L5 4.5H0z" fill="#555" /></svg>
              <ScrollThumb />
            </ScrollTrack>
          </SheetPane>

          <TaskPane>
            <PaneHeader>
              <PaneTitle>{"《云南公路工程工程量标准清单及计量规范》 (DB53T 1362—2025)"}</PaneTitle>
              <PaneButtons>
                <PlainButton aria-label="任务窗格选项"><Chevron size={9} /></PlainButton>
                <PlainButton aria-label="关闭窗格"><Close /></PlainButton>
              </PaneButtons>
            </PaneHeader>
            <PaneBody>
              <Card $grow={188}>
                <TargetBar>
                  <RadioLabel>
                    <Radio type="radio" name="target" checked={target === "current"} onChange={() => setTarget("current")} />
                    当前工作表
                  </RadioLabel>
                  <RadioLabel>
                    <Radio type="radio" name="target" checked={target === "new"} onChange={() => setTarget("new")} />
                    新建工作簿
                  </RadioLabel>
                </TargetBar>
                <Actions>
                  <SolidButton>生成规则</SolidButton>
                  <SolidButton $muted>插入清单</SolidButton>
                  <ActionsEnd>
                    <PlainButton aria-label="导出"><SheetAddIcon /></PlainButton>
                    <BoxedButton aria-label="查找"><Magnifier color="#777" /></BoxedButton>
                  </ActionsEnd>
                </Actions>
                <Tree>
                  {chapters.map((c) => (
                    <TreeItem key={c} $selected={c === chapter} onClick={() => setChapter(c)}>
                      <PlainButton aria-label={`展开 ${c}`}><TreeArrow selected={c === chapter} /></PlainButton>
                      <TreeLabel><CheckBox type="checkbox" />{c}</TreeLabel>
                    </TreeItem>
                  ))}
                </Tree>
              </Card>
              <Gutter>
                <GutterLine />
                <CollapseButton aria-label="收起"><Chevron size={8} dir="left" /></CollapseButton>
              </Gutter>
              <Card $grow={290}>
                <PreviewHeader>
                  <PreviewTitle>100 总则</PreviewTitle>
                  <PreviewNote>下级预览 · 共 6 行</PreviewNote>
                  <FloatingBadge aria-label="助手"><PinwheelIcon /></FloatingBadge>
                </PreviewHeader>
                <TableFrame>
                  <DataTable>
                    <thead>
                      <tr>
                        <DataHead $width="23%">编码</DataHead>
                        <DataHead>名称</DataHead>
                        <DataHead $width="15%" $center>类型</DataHead>
                      </tr>
                    </thead>
                    <tbody>
                      {sections.map(([code, name, kind]) => (
                        <tr key={code}>
                          <DataCell>{code}</DataCell>
                          <DataCell>{name}</DataCell>
                          <DataCell $center>{kind}</DataCell>
                        </tr>
                      ))}
                    </tbody>
                  </DataTable>
                </TableFrame>
              </Card>
            </PaneBody>
          </TaskPane>
        </Workspace>
      </AppWindow>
    </Page>
  );
}
